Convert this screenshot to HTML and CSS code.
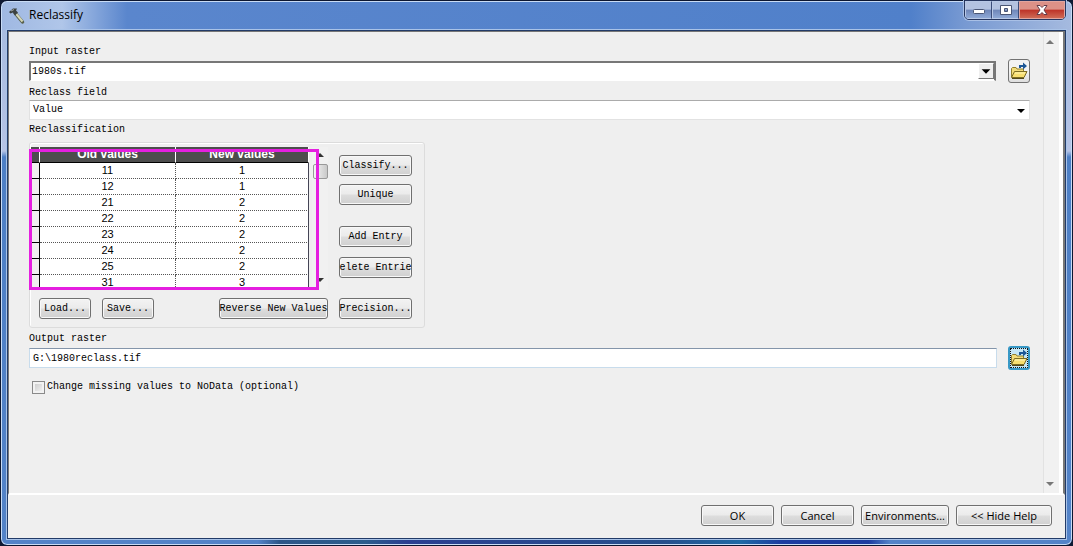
FILE: index.html
```html
<!DOCTYPE html>
<html lang="en">
<head>
<meta charset="utf-8">
<title>Reclassify</title>
<link rel="stylesheet" href="styles.css">
</head>
<body>
<svg class="defs" aria-hidden="true">
  <symbol id="folder" viewBox="0 0 18 18">
    <path d="M1.500 15V6.500l1-1h3.500l1 1.500h6.500v3" fill="#f3dc78" stroke="#91802f"/>
    <path d="M1.500 15.500L4.500 9.500H17L14 15.500z" fill="#f8df70" stroke="#7b6b24"/>
    <path d="M5 11h10" stroke="#fff6b8"/>
    <path d="M2 16.500h12" stroke="#514819"/>
    <path d="M9 5V3h4V.5l4 3.500-4 3.500V5h-2v1H9z" fill="#1d5796"/>
  </symbol>
</svg>
<main class="window">
  <header class="titlebar">
    <svg class="hammer" viewBox="0 0 18 18" aria-hidden="true">
      <path d="M7 6L14.500 15" stroke="#59614c" stroke-width="3.500" stroke-linecap="round"/>
      <path d="M7 5.500L14.500 14.500" stroke="#d5d8b8" stroke-width="2"/>
      <path d="M1 5L5 1.500l4 0-1 2 2 2-3 3-2-3-2.500 1z" fill="#3c4240"/>
      <path d="M3 4l3-1.500" stroke="#a4aaa5"/>
    </svg>
    <h1>Reclassify</h1>
    <div class="caption">
      <button type="button" aria-label="Minimize"><svg viewBox="0 0 14 10"><rect x="1.500" y="4.500" width="11" height="4" rx="1" fill="#fff" stroke="#4a5675"/></svg></button>
      <button type="button" aria-label="Maximize"><svg viewBox="0 0 14 10"><path fill-rule="evenodd" d="M1.500.5h11v9h-11zM5.500 3.500v3h3v-3z" fill="#fff" stroke="#4a5675"/></svg></button>
      <button type="button" class="close" aria-label="Close"><svg viewBox="0 0 14 10"><path d="M2 .5h3l2 2 2-2h3L9 5l3 4.500H9l-2-2-2 2H2L5 5z" fill="#fff" stroke="#653c48"/></svg></button>
    </div>
  </header>
  <div class="client">
    <div class="pane">
      <form class="form">
        <label class="label" for="in">Input raster</label>
        <div class="line">
          <div class="combo sunken">
            <select id="in"><option>1980s.tif</option></select>
            <svg class="drop raised" viewBox="0 0 16 16" aria-hidden="true"><path d="M3 6h10l-5 5z"/></svg>
          </div>
          <button type="button" class="browse" aria-label="Browse input"><svg><use href="#folder"/></svg></button>
        </div>
        <label class="label field-label" for="field">Reclass field</label>
        <div class="combo">
          <select id="field"><option>Value</option></select>
          <svg class="drop" viewBox="0 0 16 16" aria-hidden="true"><path d="M4 6h8l-4 4z"/></svg>
        </div>
        <h2 class="label group-label">Reclassification</h2>
        <section class="group">
          <div class="left">
            <div class="grid-area">
              <div class="grid">
                <table>
                  <thead><tr><th class="mark"></th><th class="old">Old values</th><th>New values</th></tr></thead>
                  <tbody>
                    <tr><td class="mark"></td><td>11</td><td>1</td></tr>
                    <tr><td class="mark"></td><td>12</td><td>1</td></tr>
                    <tr><td class="mark"></td><td>21</td><td>2</td></tr>
                    <tr><td class="mark"></td><td>22</td><td>2</td></tr>
                    <tr><td class="mark"></td><td>23</td><td>2</td></tr>
                    <tr><td class="mark"></td><td>24</td><td>2</td></tr>
                    <tr><td class="mark"></td><td>25</td><td>2</td></tr>
                    <tr><td class="mark"></td><td>31</td><td>3</td></tr>
                  </tbody>
                </table>
              </div>
              <div class="scroll small">
                <svg viewBox="0 0 8 4"><path d="M4 0l4 4H0z"/></svg>
                <span class="thumb"></span>
                <svg class="end" viewBox="0 0 8 4"><path d="M0 0h8L4 4z"/></svg>
              </div>
              <div class="highlight"></div>
            </div>
            <div class="file-buttons">
              <button type="button" class="btn short">Load...</button>
              <button type="button" class="btn short">Save...</button>
              <button type="button" class="btn long">Reverse New Values</button>
            </div>
          </div>
          <div class="actions">
            <button type="button" class="btn">Classify...</button>
            <button type="button" class="btn">Unique</button>
            <button type="button" class="btn add">Add Entry</button>
            <button type="button" class="btn delete" aria-label="Delete Entries">elete Entrie</button>
            <button type="button" class="btn precision">Precision...</button>
          </div>
        </section>
        <label class="label out-label" for="out">Output raster</label>
        <div class="line">
          <input class="text" id="out" type="text" value="G:\1980reclass.tif">
          <button type="button" class="browse focused" aria-label="Browse output"><svg><use href="#folder"/></svg></button>
        </div>
        <label class="check"><input type="checkbox">Change missing values to NoData (optional)</label>
      </form>
      <div class="scroll">
        <svg viewBox="0 0 8 4"><path d="M4 0l4 4H0z"/></svg>
        <svg class="end" viewBox="0 0 8 4"><path d="M0 0h8L4 4z"/></svg>
      </div>
    </div>
    <footer class="footer">
      <button type="button" class="btn">OK</button>
      <button type="button" class="btn">Cancel</button>
      <button type="button" class="btn env">Environments...</button>
      <button type="button" class="btn help">&lt;&lt; Hide Help</button>
    </footer>
  </div>
</main>
</body>
</html>
```
FILE: styles.css
```css
* { box-sizing: border-box; }
body {
  margin: 0;
  background: #101a33;
  color: #000;
  font: 10px/14px "Liberation Mono", monospace;
}
button, input, select { font: inherit; color: inherit; }
svg { display: block; fill: none; }
.defs { position: absolute; width: 0; height: 0; }

.window {
  display: flex;
  flex-direction: column;
  min-height: 100vh;
  padding: 0 6px 6px;
  border: 1px solid #0c1630;
  border-radius: 7px;
  box-shadow: inset 0 0 0 1px #c9dcf5;
  background:
    linear-gradient(90deg, transparent 24%, #2d5688 26%, #2b5d8c 34%, #2b3f91 38%, #264f8c 62%, #1e6aa5 69%, #1d3ba0 73%, #1d3ba0 81%, transparent 83%) 0 100% / 100% 6px no-repeat,
    linear-gradient(180deg, #a5badf 0, #b5c3e5 150px, #4d7fc5 156px, #5383c8 100%);
}
.titlebar {
  display: flex;
  align-items: flex-start;
  height: 28px;
  margin: 1px -5px 0;
  padding-left: 6px;
  border-radius: 6px 6px 0 0;
  background: linear-gradient(90deg, #9fb8e2 0, #b0c6e9 60px, #5a86cd 125px, #5080ca 85%, #7799d2 90%, #a5badf 100%);
}
.hammer { width: 18px; height: 18px; margin-top: 5px; }
h1 {
  margin: 4px 0 0 3px;
  font: 12px/18px "Open Sans", sans-serif;
}
.caption {
  display: flex;
  height: 20px;
  margin: -2px 5px 0 auto;
  border: 1px solid #26365f;
  border-radius: 0 0 5px 5px;
  box-shadow: 0 0 0 1px #a9c0e6;
  overflow: hidden;
}
.caption button {
  display: flex;
  align-items: center;
  justify-content: center;
  width: 27px;
  padding: 0;
  border: 1px solid #b8c8e6;
  border-right: 1px solid #3b4c78;
  background: linear-gradient(#b3c2e0 45%, #6f86b8 50%, #8fa9d6);
}
.caption .close {
  width: 46px;
  border-color: #e0a59f;
  background: linear-gradient(#dc9187 45%, #bd3328 50%, #cf6a55);
}
.caption svg { width: 14px; height: 10px; }

.client {
  display: flex;
  flex: 1;
  flex-direction: column;
  border: 1px solid #223b68;
  background: #efefef;
  box-shadow: 0 0 0 1px #a9c3e8;
}
.pane {
  display: flex;
  flex: 1;
  border: solid #777;
  border-width: 1px 2px 0 1px;
  border-bottom: 2px solid #fff;
}
.form { flex: 1; min-width: 0; padding: 13px 13px 0 20px; }
.label {
  display: block;
  margin: 0;
  font: inherit;
}
.line { display: flex; align-items: center; gap: 11px; height: 24px; }
.combo {
  position: relative;
  flex: 1;
  height: 20px;
  border: 1px solid #e2e2e2;
  border-top-color: #ababab;
  background: #fff;
}
.combo select {
  display: block;
  width: 100%;
  height: 18px;
  padding: 0 20px 0 3px;
  border: 0;
  appearance: none;
  background: transparent;
}
.drop { position: absolute; top: 2px; right: 0; width: 16px; height: 16px; fill: #000; pointer-events: none; }
.sunken { margin-right: 1px; border: 1px solid #777; border-width: 2px 2px 1px 2px; border-bottom-color: #fff; }
.sunken select { padding-left: 1px; }
.raised { top: 0; background: #efefef; border: 1px solid #fff; border-right-color: #777; border-bottom-color: #777; }
.browse {
  display: flex;
  align-items: center;
  justify-content: center;
  flex: none;
  width: 22px;
  height: 24px;
  padding: 0;
  border: 1px solid #727272;
  border-radius: 3px;
  background: linear-gradient(#f3f3f3 50%, #dedede);
}
.browse svg { flex: none; width: 18px; height: 18px; }
.focused { border: 2px solid #3798c6; outline: 1px dotted #111; outline-offset: -3px; background: #c5e6f5; }
.field-label { margin-top: 3px; }
.group-label { margin-top: 3px; }

.group {
  display: flex;
  gap: 11px;
  width: 396px;
  height: 186px;
  margin-top: 5px;
  border: 1px solid #dcdcdc;
  border-radius: 3px;
  box-shadow: inset 1px 1px #fff;
}
.left { width: 298px; }
.grid-area { position: relative; display: flex; gap: 3px; height: 143px; margin-top: 4px; }
.grid { width: 279px; margin-left: 1px; overflow: hidden; }
table { width: 100%; border-collapse: separate; border-spacing: 0; table-layout: fixed; }
th, td {
  height: 16px;
  padding: 0;
  background: #fff;
  border-right: 1px dotted #555;
  border-bottom: 1px dotted #555;
  font: 11px/15px "Liberation Sans", sans-serif;
  text-align: center;
}
th {
  height: 16px;
  border-right: 1px solid #fff;
  border-bottom: 1px solid #000;
  background: #4d4d4d;
  color: #fff;
  font: bold 12px/15px "Liberation Sans", sans-serif;
}
td:last-child { border-right: 1px solid #445; }
th.mark { width: 9px; }
th.old { width: 136px; }
td.mark { background: #efefef; border-right: 1px solid #000; border-bottom: 1px solid #000; }
.highlight {
  position: absolute;
  top: 2px;
  left: -1px;
  width: 290px;
  height: 141px;
  border: 3px solid #e51fe0;
  pointer-events: none;
}
.scroll {
  display: flex;
  flex-direction: column;
  align-items: center;
  width: 20px;
  padding: 8px 4px 7px 0;
  border-left: 1px solid #e2e2e2;
  border-right: 4px solid #fff;
  background: #f1f1f1;
}
.scroll svg { width: 8px; height: 4px; fill: #777; }
.scroll .end { margin-top: auto; }
.small { width: 16px; padding: 6px 0 8px; border: 0; }
.thumb { width: 15px; height: 15px; margin-top: 7px; border: 1px solid #999; border-radius: 2px; background: linear-gradient(90deg, #f5f5f5, #c9c9c9); }
.small svg { fill: #333; }

.btn {
  display: flex;
  align-items: center;
  justify-content: center;
  width: 73px;
  height: 21px;
  padding: 0;
  border: 1px solid #707070;
  border-radius: 3px;
  background: linear-gradient(#f3f3f3, #ebebeb 48%, #dddddd 52%, #d0d0d0);
  box-shadow: inset 0 0 0 1px #f8f8f8;
  white-space: nowrap;
}
.file-buttons { display: flex; gap: 11px; margin: 8px 0 0 9px; }
.short { width: 52px; }
.long { width: 109px; margin-left: auto; }
.actions { display: flex; flex-direction: column; padding-top: 12px; }
.actions .btn + .btn { margin-top: 8px; }
.actions .add.add { margin-top: 21px; }
.actions .delete.delete { margin-top: 10px; }
.actions .precision.precision { margin-top: 20px; }

.out-label { margin-top: 4px; }
.text {
  flex: 1;
  min-width: 0;
  height: 20px;
  padding: 0 3px;
  border: 1px solid #c8dcec;
  border-top-color: #8495aa;
  background: #fff;
}
.check { display: flex; align-items: center; gap: 2px; width: max-content; margin: 10px 0 0 3px; }
.check input {
  width: 13px;
  height: 13px;
  margin: 0;
  border: 1px solid #8a8a8a;
  appearance: none;
  background: linear-gradient(135deg, #c6c6c6, #f8f8f8);
  box-shadow: inset 0 0 0 2px #f2f2f2;
}
.check input:checked { background: #456; }
.footer {
  display: flex;
  justify-content: flex-end;
  gap: 7px;
  padding: 10px 13px 12px;
  font: 11px/14px "Open Sans", sans-serif;
}
.footer .env { width: 88px; }
.footer .help { width: 96px; }
```
